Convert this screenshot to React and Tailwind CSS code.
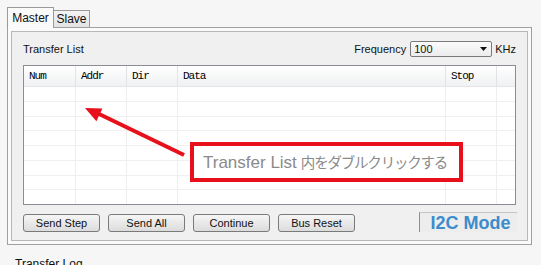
import React from "react";

const COLS = [
  { label: "Num", w: "w-[52px]" },
  { label: "Addr", w: "w-[51px]" },
  { label: "Dir", w: "w-[51px]" },
  { label: "Data", w: "w-[268px]" },
  { label: "Stop", w: "w-[51px]" },
];

const ROWS = [0, 1, 2, 3, 4, 5, 6, 7];

function Btn({ children }) {
  return (
    <button className="w-[77px] h-[18px] border border-[#7a7a7a] rounded-[3px] bg-gradient-to-b from-[#f6f6f6] to-[#dcdcdc] text-[11px] leading-none text-[#111]">
      {children}
    </button>
  );
}

export default function App() {
  return (
    <div className="relative w-[541px] h-[265px] overflow-hidden bg-[#f6f6f6] font-['Liberation_Sans',Arial,sans-serif] text-[#111]">
      {/* tabs */}
      <div className="flex items-end h-[27px] pl-[7px]">
        <div className="relative z-10 -mb-px w-[47px] h-[21px] border border-b-0 border-[#9a9a9a] bg-[#fafafa] flex items-center justify-center text-[12px]">
          Master
        </div>
        <div className="w-[36px] h-[17px] border border-l-0 border-b-0 border-[#9a9a9a] bg-gradient-to-b from-[#f3f3f3] to-[#e3e3e3] flex items-center justify-center text-[12px]">
          Slave
        </div>
      </div>

      {/* tab page */}
      <div className="ml-[7px] w-[525px] h-[218px] border border-[#a0a0a0] bg-[#fafafa] p-[3px]">
        <div className="h-full border border-[#b8b8b8] bg-[#f0f0f0] px-[11px] flex flex-col">
          <div className="mt-[9px] h-[16px] flex items-center justify-between">
            <span className="text-[11px]">Transfer List</span>
            <div className="flex items-center">
              <span className="text-[11px]">Frequency</span>
              <div className="ml-[4px] w-[82px] h-[16px] border border-[#7a7a7a] rounded-[2px] bg-gradient-to-b from-[#fbfbfb] to-[#ececec] flex items-center justify-between pl-[3px] pr-[4px]">
                <span className="text-[11px] leading-none">100</span>
                <svg width="7" height="4" viewBox="0 0 7 4">
                  <polygon points="0,0 7,0 3.5,4" fill="#111" />
                </svg>
              </div>
              <span className="ml-[3px] text-[11px]">KHz</span>
            </div>
          </div>

          {/* list */}
          <div className="mt-[8px] h-[140px] border border-[#8a8d93] bg-white flex flex-col">
            <div className="h-[21px] flex bg-gradient-to-b from-white to-[#f0f1f3] border-b border-[#e4e5e7]">
              {COLS.map((c) => (
                <div
                  key={c.label}
                  className={`${c.w} border-r border-[#e2e3e5] flex items-center pl-[5px] font-['Liberation_Mono',monospace] text-[11px] tracking-[-1px] text-[#000]`}
                >
                  {c.label}
                </div>
              ))}
              <div className="flex-1" />
            </div>
            <div className="flex-1 flex flex-col">
              {ROWS.map((r) => (
                <div key={r} className="flex-1 flex border-b border-[#f0f0f0] last:border-b-0">
                  {COLS.map((c) => (
                    <div key={c.label} className={`${c.w} border-r border-[#eeeeee]`} />
                  ))}
                  <div className="flex-1" />
                </div>
              ))}
            </div>
          </div>

          {/* buttons */}
          <div className="mt-[7px] h-[20px] flex items-end justify-between">
            <div className="flex gap-[8px]">
              <Btn>Send Step</Btn>
              <Btn>Send All</Btn>
              <Btn>Continue</Btn>
              <Btn>Bus Reset</Btn>
            </div>
            <div className="w-[98px] h-[20px] -mr-px border-l border-t border-l-[#8e8e8e] border-t-[#c4c4c4] bg-[#ededed] flex items-center justify-center pl-[4px] font-['Liberation_Sans',Arial,sans-serif] font-bold text-[18px] leading-none text-[#3c8ccb]">
              I2C Mode
            </div>
          </div>
        </div>
      </div>

      <div className="mt-[12px] pl-[15px] text-[12px] leading-[14px]">Transfer Log</div>

      {/* annotation */}
      <svg className="absolute inset-0 pointer-events-none" width="541" height="265">
        <line x1="184" y1="155" x2="97" y2="113" stroke="#e8101a" strokeWidth="4" />
        <polygon points="85,108 96.4,121.2 102.4,108.6" fill="#e8101a" />
      </svg>
      <div className="absolute left-[190px] top-[142px] w-[273px] h-[40px] border-[4px] border-[#e8101a] bg-white flex items-center pl-[9px] text-[#8a8a8a]">
        <span className="text-[17px] leading-none">Transfer List </span>
        <span className="ml-[4px] text-[14.5px] leading-none tracking-[-1.2px] font-['Noto_Sans_CJK_JP',sans-serif]">
          内をダブルクリックする
        </span>
      </div>
    </div>
  );
}
